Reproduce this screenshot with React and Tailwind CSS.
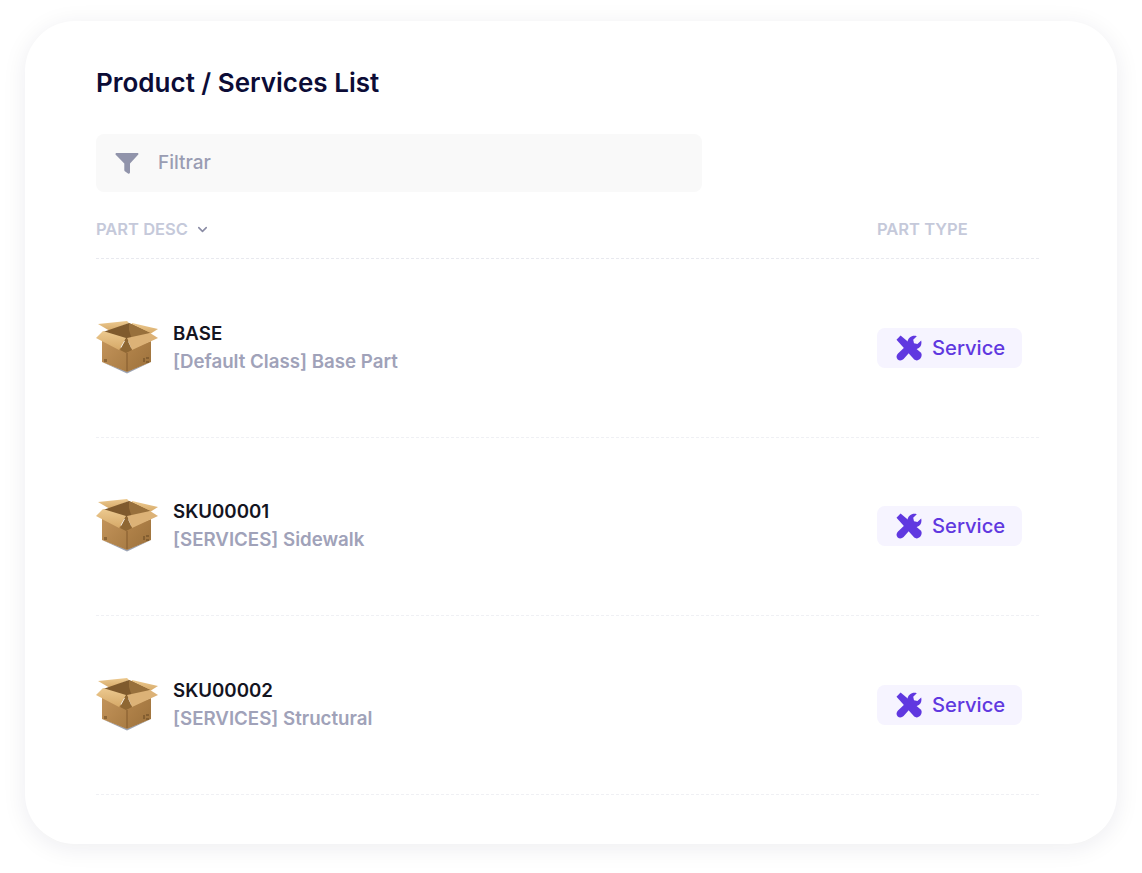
import { ChevronDown } from 'lucide-react'

const ROWS = [
  { code: 'BASE', desc: '[Default Class] Base Part' },
  { code: 'SKU00001', desc: '[SERVICES] Sidewalk' },
  { code: 'SKU00002', desc: '[SERVICES] Structural' },
]

function BoxIcon({ id }) {
  return (
    <svg width="64" height="54" viewBox="0 0 64 54" className="shrink-0 -mt-[2px]">
      <defs>
        <linearGradient id={`left-${id}`} x1="0" y1="0" x2="1" y2="1">
          <stop offset="0" stopColor="#c2935a" />
          <stop offset="1" stopColor="#a97c44" />
        </linearGradient>
        <linearGradient id={`right-${id}`} x1="0" y1="0" x2="1" y2="1">
          <stop offset="0" stopColor="#b4854c" />
          <stop offset="1" stopColor="#9c713b" />
        </linearGradient>
        <linearGradient id={`flap-${id}`} x1="0" y1="0" x2="0" y2="1">
          <stop offset="0" stopColor="#ecc98f" />
          <stop offset="1" stopColor="#d6a968" />
        </linearGradient>
      </defs>
      {/* shadow */}
      <path d="M6 42 L31 53.5 L55 42 L31 51.5 Z" fill="#4a5a78" opacity="0.55" />
      {/* back flaps */}
      <path d="M2 4 L31 1 L33 3 L14 11 Z" fill={`url(#flap-${id})`} />
      <path d="M36 3 L62 9 L54 14 L35 5 Z" fill={`url(#flap-${id})`} />
      {/* inside */}
      <path d="M7 12 L33 3 L54 13 L31 22 Z" fill="#7f5a2d" />
      <path d="M33 3 L54 13 L36 20 L33 10 Z" fill="#98703c" />
      {/* walls */}
      <path d="M6 20 L31 30 L31 52 L6 42 Z" fill={`url(#left-${id})`} />
      <path d="M31 30 L55 21 L55 42 L31 52 Z" fill={`url(#right-${id})`} />
      {/* front flaps */}
      <path d="M7 11 L30 18 L23 30 L0 18 Z" fill={`url(#flap-${id})`} />
      <path d="M31 18 L54 13 L62 18 L36 30 Z" fill="#dcb277" />
      <path d="M30 19 L24 30 L30 33 L36 30 L31 19 Z" fill="#8f6733" />
      <path d="M30.4 33 L31.6 33 L31.6 51 L30.4 51 Z" fill="#8a6132" />
      <path d="M8 39 h3 v3 h-3 Z M47 38 h2 v4 h-2 Z M50 37 h3 v2 h-3 Z M50 41 h3 v2 h-3 Z" fill="#6f4f27" opacity="0.6" />
    </svg>
  )
}

function ToolsIcon() {
  return (
    <svg width="26" height="26" viewBox="0 0 26 26" className="shrink-0" fill="#6038e0">
      <path d="M0.5 4.8 L4.6 0.5 L25 17.8 C26 19 25.9 21.6 24.4 23.6 C22.6 25.6 20 25.9 18.2 24.6 Z" />
      <path d="M25.2 5.4 C26 8.6 25 11.4 22.8 13 C20.6 14.6 18 14.8 15.8 13.8 L11.6 9.2 C11 6.5 11.9 3.9 13.8 2.4 C15.8 0.8 18.4 0.4 20.8 1.2 L17.2 4.8 L18 8.2 L21.4 9 Z" />
      <path d="M8.6 12.2 L13.6 17.2 L7.6 24 C5.9 25.7 3.3 25.9 1.7 24.4 C0 22.8 0.2 20 2 18.4 Z" />
    </svg>
  )
}

function Row({ row, id }) {
  return (
    <div className="h-[178.5px] flex items-center justify-between border-b border-dashed border-[#eff0f4]">
      <div className="flex items-center gap-[13px]">
        <BoxIcon id={id} />
        <div>
          <p className="text-[18.7px] leading-[28px] font-semibold text-[#14141f]">{row.code}</p>
          <p className="text-[18.7px] leading-[28px] font-semibold text-[#a0a2b9]">{row.desc}</p>
        </div>
      </div>
      <div className="w-[162px]">
        <div className="w-[145px] h-[40px] rounded-lg bg-[#f6f4ff] flex items-center gap-[10px] pl-[19px]">
          <ToolsIcon />
          <span className="text-[20.2px] leading-[28px] font-medium text-[#6038e0]">Service</span>
        </div>
      </div>
    </div>
  )
}

export default function App() {
  return (
    <div className="w-[1142px] h-[873px] bg-white pt-[21px] px-[25px] font-['Inter',sans-serif]">
      <div className="h-[823px] rounded-[50px] bg-white pt-[44px] pl-[71px] pr-[78px] shadow-[0_4px_24px_rgba(30,30,60,0.08)]">
        <h1 className="text-[26px] leading-[36px] font-semibold text-[#0c0c36]">Product / Services List</h1>

        <div className="mt-[33px] w-[606px] h-[58px] rounded-lg bg-[#f9f9f9] flex items-center gap-[19px] pl-[19px]">
          <svg width="24" height="21" viewBox="0 0 24 21" fill="#9194ab">
            <path d="M0.5 1.4 C0.3 0.6 0.8 0 1.6 0 H22.4 C23.3 0 23.7 0.7 23.3 1.5 L15 10.5 V19.3 C15 20.5 14 21 13 20.4 L10.2 18.6 C9.6 18.2 9.3 17.8 9.3 17 V10.5 Z" />
          </svg>
          <span className="text-[19px] font-medium text-[#9a9db3]">Filtrar</span>
        </div>

        <div className="mt-[18px] h-[49px] flex items-center justify-between border-b border-dashed border-[#e8e9ef] pb-[10px]">
          <div className="flex items-center gap-[7px]">
            <span className="text-[16.5px] font-semibold text-[#c5c9da]">PART DESC</span>
            <ChevronDown size={15} strokeWidth={2.5} className="text-[#8a8ca5]" />
          </div>
          <span className="w-[162px] text-[16.5px] font-semibold text-[#c5c9da]">PART TYPE</span>
        </div>

        {ROWS.map((row, i) => (
          <Row key={row.code} row={row} id={i} />
        ))}
      </div>
    </div>
  )
}
